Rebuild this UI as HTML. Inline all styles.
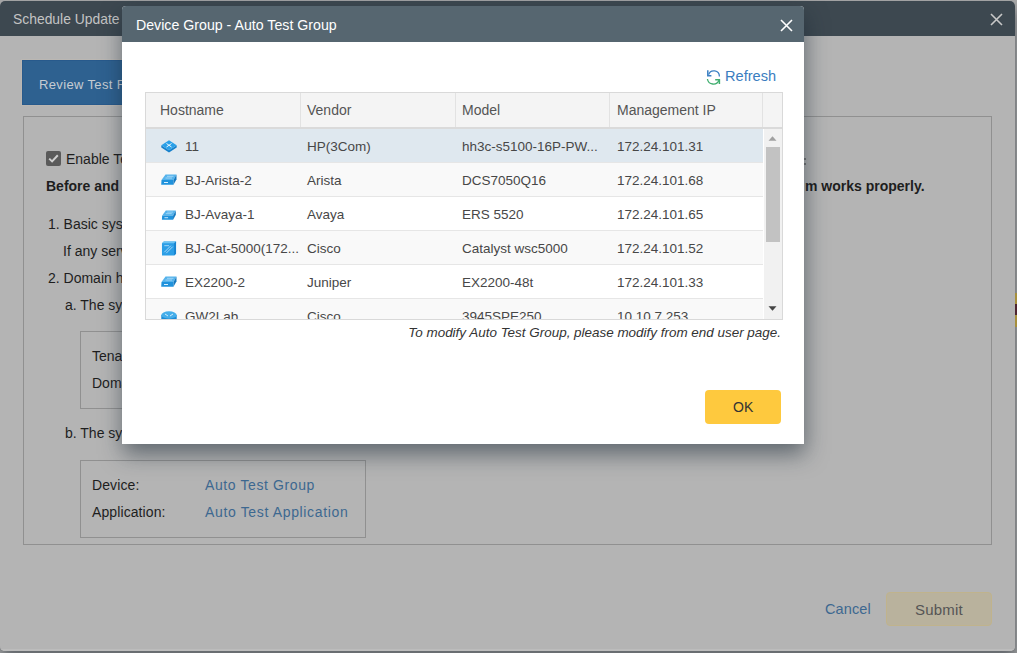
<!DOCTYPE html>
<html><head><meta charset="utf-8">
<style>
*{box-sizing:border-box;margin:0;padding:0}
html,body{width:1017px;height:653px;overflow:hidden;background:#aaaaaa;font-family:"Liberation Sans",sans-serif;position:relative}
.abs{position:absolute}
.t{position:absolute;white-space:nowrap;line-height:1}
/* outer dialog */
#outer{left:0;top:1px;width:1015px;height:650px;background:#b4b4b4;border-radius:5px;overflow:hidden}
#oshadow{left:0;top:1px;width:1015px;height:650px;border-radius:5px;box-shadow:1px 8px 14px rgba(20,30,40,.5),inset -1px -1px 0 #bdbdbd}
#outer .hdr{left:0;top:0;width:1015px;height:35px;background:#3d4850}
#outer .title{left:13px;top:10px;font-size:15px;color:#c4c4c4;transform:scaleX(.925);transform-origin:0 0}
#outer .x{left:990px;top:12px;width:13px;height:13px}
.tab{left:22px;top:59px;width:300px;height:45px;background:#2e6190;box-shadow:0 0 0 1px #bbb7b2,inset 1px 1px 0 #285a8c,inset 0 -1px 0 #285a8c}
.tab .t{left:17px;top:18px;font-size:13px;color:#c6ccd2;letter-spacing:.35px}
.cbox{left:23px;top:115px;width:969px;height:429px;border:1px solid #909090}
.bt{font-size:14px;color:#1e1e1e}
.box{border:1px solid #909090}
.chk{left:46px;top:150px;width:15px;height:15px;background:#5a5a5a;border-radius:2px}
.link{color:#3d6890}
/* modal */
#modal{left:122px;top:6px;width:682px;height:438px;background:#fff;border-radius:4px 4px 0 0;box-shadow:1px 10px 22px rgba(20,35,50,.53)}
#modal .hdr{left:0;top:0;width:682px;height:36px;background:#566670;border-radius:4px 4px 0 0}
#modal .title{left:14px;top:11px;font-size:15px;color:#fff;transform:scaleX(.945);transform-origin:0 0}
#modal .x{left:658px;top:13px;width:13px;height:13px}
.refresh{left:584px;top:63px}
.tbl{left:23px;top:86px;width:638px;height:228px;border:1px solid #d9d9d9;overflow:hidden;background:#fff}
.th{left:0;top:0;width:636px;height:36px;background:#f4f4f4;border-bottom:2px solid #dadada}
.th .t{font-size:14px;color:#555;top:10px}
.cd{position:absolute;top:0;width:1px;height:34px;background:#e2e2e2}
.row{position:absolute;left:0;width:617px;height:34px;border-bottom:1px solid #e6e6e6}
.row .t{font-size:13.5px;color:#474747;top:11px}
.row.sel{background:#dfe8ef}
.row.alt{background:#f9f9f9}
.sb{left:618px;top:36px;width:18px;height:190px;background:#f1f1f1}
.thumb{left:620px;top:54px;width:14px;height:95px;background:#c2c2c2}
.note{right:23px;top:320px;font-size:13.45px;font-style:italic;color:#333}
.ok{left:583px;top:384px;width:76px;height:34px;background:#fec93e;border-radius:4px}
.ok .t{left:28px;top:10px;font-size:14px;color:#333}
</style></head><body>
<div id="oshadow" class="abs"></div>
<div id="outer" class="abs">
  <div class="hdr abs"></div>
  <div class="title t">Schedule Update</div>
  <svg class="x abs" viewBox="0 0 13 13"><path d="M1 1L12 12M12 1L1 12" stroke="#c8c8c8" stroke-width="1.6"/></svg>
  <div class="tab abs"><div class="t">Review Test Result</div></div>
  <div class="cbox abs"></div>
  <div class="chk abs"><svg width="15" height="15" viewBox="0 0 15 15"><path d="M3.2 7.6L6.1 10.4L11.8 4.2" stroke="#d0d0d0" stroke-width="2" fill="none"/></svg></div>
  <div class="t bt" style="left:66px;top:151px">Enable Test</div>
  <div class="t bt" style="left:46px;top:178px;font-weight:bold">Before and after</div>
  <div class="t bt" style="left:805px;top:178px;font-weight:bold">m works properly.</div>
  <div class="abs" style="left:804px;top:157px;width:2px;height:2px;background:#777"></div>
  <div class="abs" style="left:804px;top:162px;width:2px;height:2px;background:#777"></div>
  <div class="t bt" style="left:48px;top:216px">1. Basic system</div>
  <div class="t bt" style="left:63px;top:243px">If any service</div>
  <div class="t bt" style="left:48px;top:270px">2. Domain health</div>
  <div class="t bt" style="left:65px;top:297px">a. The system</div>
  <div class="box abs" style="left:80px;top:330px;width:300px;height:78px"></div>
  <div class="t bt" style="left:92px;top:348px">Tenant:</div>
  <div class="t bt" style="left:92px;top:375px">Domain:</div>
  <div class="t bt" style="left:65px;top:425px">b. The system</div>
  <div class="box abs" style="left:80px;top:459px;width:286px;height:78px"></div>
  <div class="t bt" style="left:92px;top:477px;letter-spacing:.1px">Device:</div>
  <div class="t bt link" style="left:205px;top:477px;letter-spacing:.6px">Auto Test Group</div>
  <div class="t bt" style="left:92px;top:504px;letter-spacing:.1px">Application:</div>
  <div class="t bt link" style="left:205px;top:504px;letter-spacing:.65px">Auto Test Application</div>
  <div class="t link" style="left:825px;top:601px;font-size:14.5px;letter-spacing:.1px">Cancel</div>
  <div class="abs" style="left:886px;top:591px;width:106px;height:34px;background:#b9b29d;border:1px solid #c0b38c;border-radius:4px"></div>
  <div class="t" style="left:915px;top:601px;font-size:15px;color:#555;letter-spacing:.2px">Submit</div>
  <div class="abs" style="left:0;top:648px;width:1015px;height:2px;background:#bcbcbc"></div>
</div>
<div class="abs" style="left:1015px;top:293px;width:2px;height:34px;background:#a68f3c"></div>
<div class="abs" style="left:1015px;top:304px;width:2px;height:11px;background:#4d2430"></div>
<div id="modal" class="abs">
  <div class="hdr abs"></div>
  <div class="title t">Device Group - Auto Test Group</div>
  <svg class="x abs" viewBox="0 0 13 13"><path d="M1 1L12 12M12 1L1 12" stroke="#fff" stroke-width="1.6"/></svg>
  <div class="refresh abs">
    <svg class="abs" style="left:0;top:1px" width="16" height="16" viewBox="0 0 16 16"><path d="M2.6 4.6A5.55 5.55 0 0 1 13.4 6.4" stroke="#3b80c4" stroke-width="1.3" fill="none"/><path d="M1.8 0.3V5.8H5.4" stroke="#3b80c4" stroke-width="1.5" fill="none"/><path d="M1.4 9A6.06 6.06 0 0 0 13 10.2" stroke="#3fae6e" stroke-width="1.3" fill="none"/><path d="M9.2 9.8H13.4V13.9" stroke="#3fae6e" stroke-width="1.5" fill="none"/></svg>
    <div class="t" style="left:19px;top:-1px;font-size:15.5px;color:#3a7dc0;transform:scaleX(.94);transform-origin:0 0">Refresh</div>
  </div>
  <div class="tbl abs">
    <div class="th abs">
      <div class="t" style="left:14px">Hostname</div>
      <div class="t" style="left:161px">Vendor</div>
      <div class="t" style="left:316px">Model</div>
      <div class="t" style="left:471px">Management IP</div>
      <div class="cd" style="left:154px"></div>
      <div class="cd" style="left:309px"></div>
      <div class="cd" style="left:463px"></div>
      <div class="cd" style="left:616px"></div>
    </div>
    <div class="row sel" style="top:36px">
      <svg class="abs" style="left:15px;top:11px" width="16" height="13" viewBox="0 0 16 13"><path d="M0.3 5.2V7.4L8 12.6L15.7 7.4V5.2L8 10.2Z" fill="#1580cc"/><path d="M8 0.2L15.7 5.2L8 10.2L0.3 5.2Z" fill="#2aa0e8"/><path d="M5.5 3.5L10.5 7M10.5 3.5L5.5 7" stroke="#e8f6ff" stroke-width="1"/></svg>
      <div class="t" style="left:39px">11</div><div class="t" style="left:161px">HP(3Com)</div><div class="t" style="left:316px">hh3c-s5100-16P-PW...</div><div class="t" style="left:471px">172.24.101.31</div>
    </div>
    <div class="row alt" style="top:70px">
      <svg class="abs" style="left:15px;top:11px" width="16" height="11" viewBox="0 0 16 11"><path d="M4.5 0.5H15.5L12.5 6H0.5Z" fill="#55b3ec"/><path d="M0.5 6H12.5L12.5 10.8H0.2Z" fill="#1f92dc"/><path d="M12.5 6L15.5 0.5V5.2L12.5 10.8Z" fill="#1579bf"/><path d="M6 2.3H12.5M4.5 4H11" stroke="#bfe4fa" stroke-width=".7"/><path d="M3 8.5H7" stroke="#d8f0ff" stroke-width="1"/></svg>
      <div class="t" style="left:39px">BJ-Arista-2</div><div class="t" style="left:161px">Arista</div><div class="t" style="left:316px">DCS7050Q16</div><div class="t" style="left:471px">172.24.101.68</div>
    </div>
    <div class="row" style="top:104px">
      <svg class="abs" style="left:15px;top:13px" width="16" height="10" viewBox="0 0 16 11"><path d="M4.5 0.5H15.5L12.5 6H0.5Z" fill="#55b3ec"/><path d="M0.5 6H12.5L12.5 10.8H0.2Z" fill="#1f92dc"/><path d="M12.5 6L15.5 0.5V5.2L12.5 10.8Z" fill="#1579bf"/><path d="M6 2.3H12.5M4.5 4H11" stroke="#bfe4fa" stroke-width=".7"/><path d="M3 8.5H7" stroke="#d8f0ff" stroke-width="1"/></svg>
      <div class="t" style="left:39px">BJ-Avaya-1</div><div class="t" style="left:161px">Avaya</div><div class="t" style="left:316px">ERS 5520</div><div class="t" style="left:471px">172.24.101.65</div>
    </div>
    <div class="row alt" style="top:138px">
      <svg class="abs" style="left:15px;top:10px" width="16" height="15" viewBox="0 0 16 16"><path d="M0.5 2.5L2.5 0.5H15.5V13.5L13.5 15.5H0.5Z" fill="#2b9ee6"/><path d="M2.5 0.5H15.5L13.5 2.5H0.5Z" fill="#6cc4f4"/><path d="M13.5 2.5L15.5 0.5V13.5L13.5 15.5Z" fill="#1883cf"/><path d="M3 12L10 5M5 13L12 6M3 5H8" stroke="#cdeafc" stroke-width=".8"/></svg>
      <div class="t" style="left:39px">BJ-Cat-5000(172...</div><div class="t" style="left:161px">Cisco</div><div class="t" style="left:316px">Catalyst wsc5000</div><div class="t" style="left:471px">172.24.101.52</div>
    </div>
    <div class="row" style="top:172px">
      <svg class="abs" style="left:15px;top:11px" width="16" height="11" viewBox="0 0 16 11"><path d="M4.5 0.5H15.5L12.5 6H0.5Z" fill="#55b3ec"/><path d="M0.5 6H12.5L12.5 10.8H0.2Z" fill="#1f92dc"/><path d="M12.5 6L15.5 0.5V5.2L12.5 10.8Z" fill="#1579bf"/><path d="M6 2.3H12.5M4.5 4H11" stroke="#bfe4fa" stroke-width=".7"/><path d="M3 8.5H7" stroke="#d8f0ff" stroke-width="1"/></svg>
      <div class="t" style="left:39px">EX2200-2</div><div class="t" style="left:161px">Juniper</div><div class="t" style="left:316px">EX2200-48t</div><div class="t" style="left:471px">172.24.101.33</div>
    </div>
    <div class="row alt" style="top:206px">
      <svg class="abs" style="left:15px;top:12px" width="16" height="12" viewBox="0 0 16 12"><path d="M0.3 4V10Q8 14 15.7 10V4Z" fill="#1b8ad6"/><ellipse cx="8" cy="4" rx="7.7" ry="3.7" fill="#45aeea"/><path d="M4 3L7 5M12 3L9 5" stroke="#e0f3ff" stroke-width=".9"/></svg>
      <div class="t" style="left:39px">GW2Lab</div><div class="t" style="left:161px">Cisco</div><div class="t" style="left:316px">3945SPE250</div><div class="t" style="left:471px">10.10.7.253</div>
    </div>
    <div class="sb abs"></div>
    <div class="thumb abs"></div>
    <svg class="abs" style="left:622px;top:43px" width="9" height="5" viewBox="0 0 9 5"><path d="M0.5 4.8L4.5 0.3L8.5 4.8Z" fill="#a0a0a0"/></svg>
    <svg class="abs" style="left:622px;top:213px" width="9" height="5" viewBox="0 0 9 5"><path d="M0.5 0.2L4.5 4.7L8.5 0.2Z" fill="#444"/></svg>
  </div>
  <div class="note t">To modify Auto Test Group, please modify from end user page.</div>
  <div class="ok abs"><div class="t">OK</div></div>
</div>
</body></html>
